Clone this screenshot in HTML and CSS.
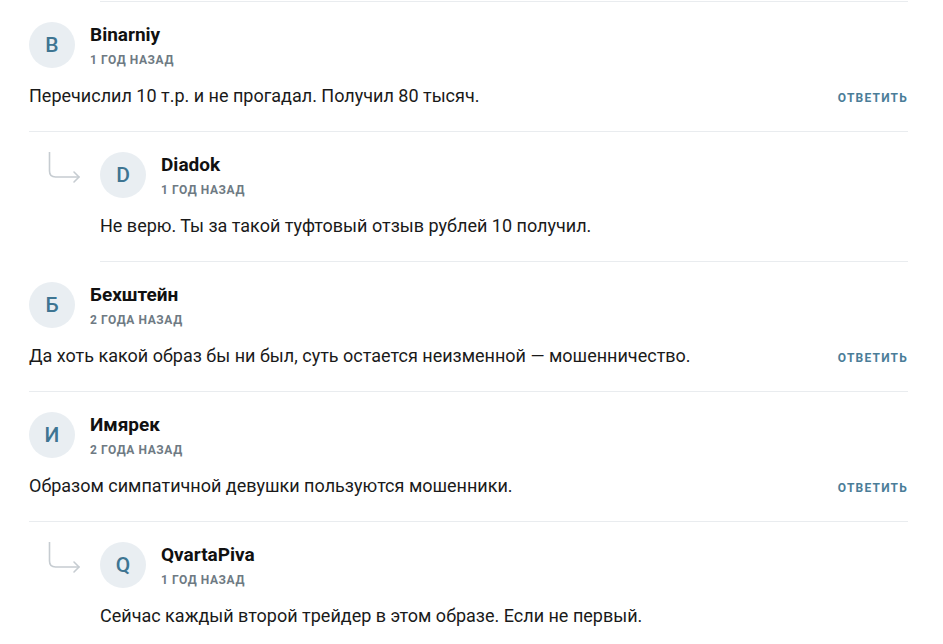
FILE: index.html
```html
<!DOCTYPE html>
<html lang="ru">
<head>
  <meta charset="UTF-8" />
  <meta name="viewport" content="width=device-width, initial-scale=1" />
  <title>Комментарии</title>
  <link rel="stylesheet" href="styles.css">
</head>
<body>

<div class="comments">
  <!-- конец предыдущей ветки -->
  <div class="divider reply"></div>

  <div class="comment">
    <div class="comment-head">
      <div class="avatar">B</div>
      <div class="meta">
        <div class="author">Binarniy</div>
        <div class="date">1 год назад</div>
      </div>
    </div>
    <div class="comment-body">
      <p>Перечислил 10 т.р. и не прогадал. Получил 80 тысяч.</p>
      <a href="#" class="btn-reply">Ответить</a>
    </div>
  </div>

  <div class="comment reply">
    <svg class="reply-arrow" width="34" height="32" viewBox="0 0 34 32">
      <path d="M1.5 0 V19 Q1.5 25 7.5 25 H31" />
      <path d="M26 20 L31 25 L26 30" />
    </svg>
    <div class="comment-head">
      <div class="avatar">D</div>
      <div class="meta">
        <div class="author">Diadok</div>
        <div class="date">1 год назад</div>
      </div>
    </div>
    <div class="comment-body">
      <p>Не верю. Ты за такой туфтовый отзыв рублей 10 получил.</p>
    </div>
  </div>

  <div class="comment">
    <div class="comment-head">
      <div class="avatar">Б</div>
      <div class="meta">
        <div class="author">Бехштейн</div>
        <div class="date">2 года назад</div>
      </div>
    </div>
    <div class="comment-body">
      <p>Да хоть какой образ бы ни был, суть остается неизменной — мошенничество.</p>
      <a href="#" class="btn-reply">Ответить</a>
    </div>
  </div>

  <div class="comment">
    <div class="comment-head">
      <div class="avatar">И</div>
      <div class="meta">
        <div class="author">Имярек</div>
        <div class="date">2 года назад</div>
      </div>
    </div>
    <div class="comment-body">
      <p>Образом симпатичной девушки пользуются мошенники.</p>
      <a href="#" class="btn-reply">Ответить</a>
    </div>
  </div>

  <div class="comment reply">
    <svg class="reply-arrow" width="34" height="32" viewBox="0 0 34 32">
      <path d="M1.5 0 V19 Q1.5 25 7.5 25 H31" />
      <path d="M26 20 L31 25 L26 30" />
    </svg>
    <div class="comment-head">
      <div class="avatar">Q</div>
      <div class="meta">
        <div class="author">QvartaPiva</div>
        <div class="date">1 год назад</div>
      </div>
    </div>
    <div class="comment-body">
      <p>Сейчас каждый второй трейдер в этом образе. Если не первый.</p>
    </div>
  </div>
</div>

</body>
</html>
```

FILE: styles.css
```css
* {
  box-sizing: border-box;
}

body {
  font-family: Roboto, "Liberation Sans", Arial, sans-serif;
  background: #fff;
  color: #1a1a1a;
  margin: 0;
}

.comments {
  width: 879px;
  margin-left: 29px;
}

.divider {
  margin-top: 1px;
  border-bottom: 1px solid #e9ecef;
}

.divider.reply {
  margin-left: 71px;
}

/* Комментарий */
.comment {
  position: relative;
  padding: 20px 0 23px;
  border-bottom: 1px solid #e9ecef;
}

.comment.reply {
  margin-left: 71px;
}

.reply-arrow {
  position: absolute;
  left: -52px;
  top: 20px;
  fill: none;
  stroke: #c6ccd1;
  stroke-width: 1.6;
  stroke-linecap: round;
  stroke-linejoin: round;
}

.comment-head {
  display: flex;
  gap: 15px;
}

.avatar {
  width: 46px;
  height: 46px;
  border-radius: 50%;
  background: #e9eef2;
  color: #3e7592;
  font-size: 21px;
  font-weight: 500;
  display: flex;
  align-items: center;
  justify-content: center;
  flex-shrink: 0;
}

.meta {
  padding-top: 1px;
}

.author {
  font-size: 19px;
  font-weight: 700;
  line-height: 23px;
  color: #111;
}

.date {
  margin-top: 6px;
  font-size: 12px;
  font-weight: 700;
  line-height: 16px;
  letter-spacing: 0.6px;
  text-transform: uppercase;
  color: #6e7a83;
}

.comment-body {
  display: flex;
  justify-content: space-between;
  align-items: baseline;
  margin-top: 16px;
}

.comment-body p {
  margin: 0;
  font-size: 18px;
  line-height: 24px;
}

.btn-reply {
  font-size: 12px;
  font-weight: 700;
  letter-spacing: 1.2px;
  text-transform: uppercase;
  text-decoration: none;
  color: #4a7d98;
}
```
